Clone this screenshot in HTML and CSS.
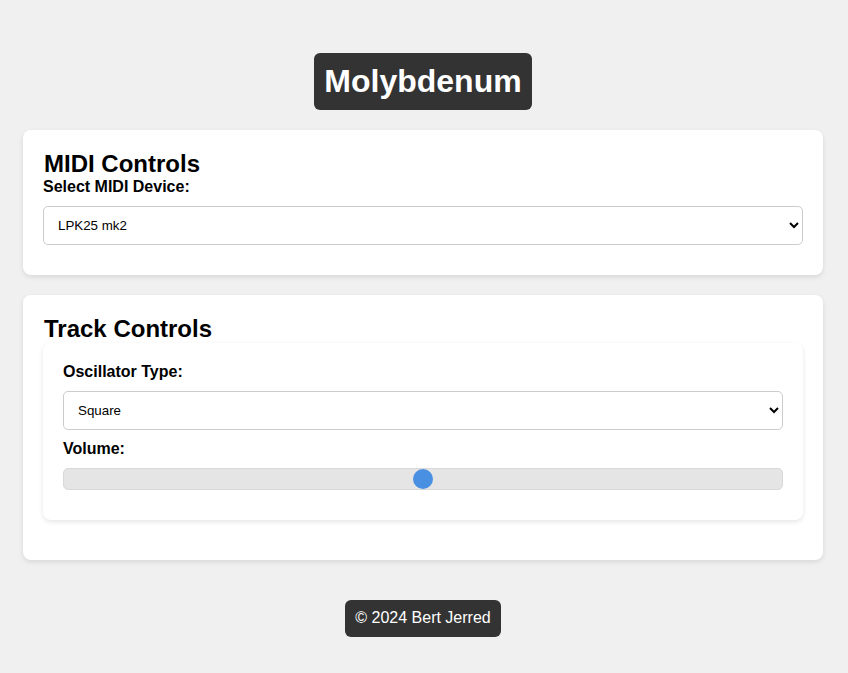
FILE: index.html
```html
<!DOCTYPE html>
<html lang="en">
<head>
<meta charset="utf-8">
<title>Molybdenum</title>
<link rel="stylesheet" href="styles.css">
</head>
<body>
<header class="site-header">
  <h1 class="title">Molybdenum</h1>
</header>
<main class="container">
  <section class="card">
    <h2 class="card-title">MIDI Controls</h2>
    <label class="field-label" for="midi">Select MIDI Device:</label>
    <select id="midi" class="field-select">
      <option>LPK25 mk2</option>
    </select>
  </section>
  <section class="card">
    <h2 class="card-title">Track Controls</h2>
    <div class="card inner">
      <label class="field-label" for="osc">Oscillator Type:</label>
      <select id="osc" class="field-select">
        <option>Square</option>
        <option>Sine</option>
        <option>Sawtooth</option>
        <option>Triangle</option>
      </select>
      <label class="field-label" for="vol">Volume:</label>
      <input id="vol" class="slider" type="range" min="0" max="100" value="50">
    </div>
  </section>
</main>
<footer class="site-footer">
  <p class="copy">© 2024 Bert Jerred</p>
</footer>
</body>
</html>
```

FILE: styles.css
```css
* { box-sizing: border-box; }

body {
  margin: 0;
  padding: 0 2px 0 0;
  background: #f0f0f0;
  font-family: "Liberation Sans", Arial, sans-serif;
  color: #000;
}

.site-header {
  text-align: center;
  padding-top: 53px;
}

.title {
  display: inline-block;
  margin: 0;
  padding: 10px;
  background: #333;
  color: #fff;
  font-size: 32px;
  font-weight: bold;
  border-radius: 6px;
}

.container {
  width: 800px;
  margin: 20px auto 0;
}

.card {
  background: #fff;
  padding: 20px;
  border-radius: 8px;
  box-shadow: 0 2px 5px rgba(0, 0, 0, 0.1);
  margin-bottom: 20px;
}

.card-title {
  margin: 0 0 0 1px;
  font-size: 24px;
  font-weight: bold;
}

.field-label {
  display: block;
  font-weight: bold;
  font-size: 16px;
  margin-bottom: 10px;
}

.field-select {
  display: block;
  width: 100%;
  padding: 10px;
  margin: 0 0 10px;
  border: 1px solid #ccc;
  border-radius: 5px;
  background: #fff;
  font-family: "Liberation Sans", Arial, sans-serif;
  font-size: 13.333px;
  color: #000;
}

.slider {
  -webkit-appearance: none;
  appearance: none;
  display: block;
  width: 100%;
  height: 22px;
  margin: 2px 0 10px;
  background: #e5e5e5;
  border: 1px solid #d8d8d8;
  border-radius: 5px;
  outline: none;
}

.slider::-webkit-slider-thumb {
  -webkit-appearance: none;
  appearance: none;
  width: 20px;
  height: 20px;
  border-radius: 50%;
  background: #4a90e2;
  border: none;
}

.site-footer {
  text-align: center;
  margin-top: 40px;
}

.copy {
  display: inline-block;
  margin: 0;
  padding: 9px 10px 10px;
  background: #333;
  color: #fff;
  font-size: 16px;
  border-radius: 6px;
}
```
